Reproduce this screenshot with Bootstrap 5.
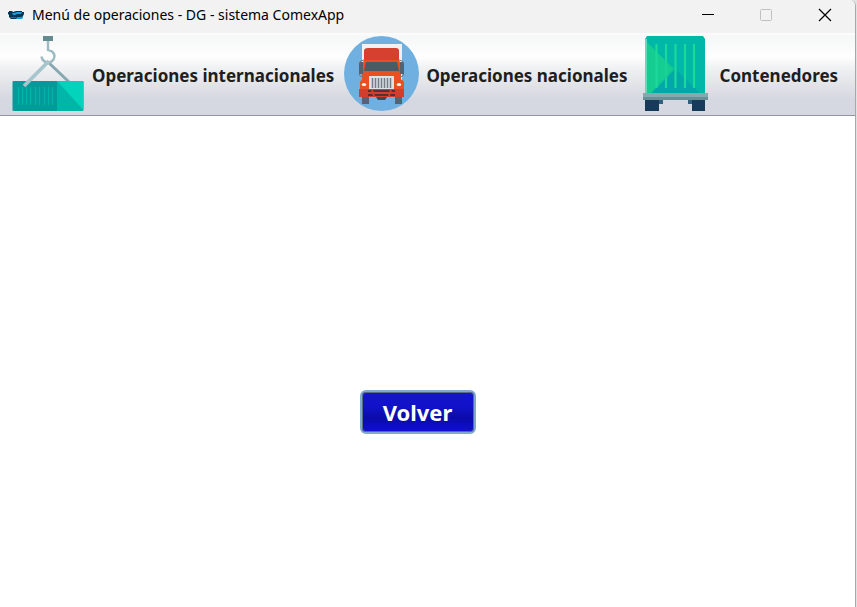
<!DOCTYPE html>
<html lang="es">
<head>
<meta charset="utf-8">
<meta name="viewport" content="width=device-width, initial-scale=1">
<title>Menú de operaciones - DG - sistema ComexApp</title>
<link href="https://cdn.jsdelivr.net/npm/bootstrap@5.3.0/dist/css/bootstrap.min.css" rel="stylesheet">
<style>
body { font-family: "Noto Sans", "Open Sans", sans-serif; background: #e2e2e2; }
.app-window { border-right: 1px solid #a8a8a8; border-top-right-radius: 6px; margin-right: 1px; overflow: hidden; }
.title-bar { height: 33px; background: #f2f2f2; padding: 0 23px 4px 8px; }
.title-text { font-size: 14px; line-height: 20px; color: #000; }
.window-controls { gap: 44px; }
.window-controls button { line-height: 0; }
.tool-bar { height: 83px; gap: 10px; padding: 0 10px 1px; border-bottom: 1px solid #9294a3;
  background: linear-gradient(#fdfdfd 0, #f6f7f7 4px, #fefefe 24px, #f0f1f2 35px, #d5d8e0 66px, #d5d8e0 100%); }
.tool-item { gap: 7px; color: #1e1e1e; font-size: 17px; line-height: 24px; }
.workspace { padding-bottom: 173px; padding-right: 20px; }
.back-btn { width: 116px; height: 44px; border: 2px solid #7fa9cf; border-radius: 6px; color: #fff; font-size: 22px; line-height: 30px;
  background: linear-gradient(#1414c8, #1212cb 35%, #0b0baa 65%, #1010d4); box-shadow: inset 0 0 0 1px #5c6c83; }
</style>
<script src="https://cdn.jsdelivr.net/npm/bootstrap@5.3.0/dist/js/bootstrap.bundle.min.js"></script>
</head>
<body>
<div class="app-window d-flex flex-column min-vh-100 bg-white">
  <header class="title-bar d-flex align-items-center justify-content-between">
    <div class="d-flex align-items-center gap-2">
      <svg width="16" height="16" viewBox="0 0 16 16" aria-hidden="true">
        <path d="M1 4h3l1 1 3-1h6v1h2v2l-1 2-1 3H3L1 10V8l-1-1V5h1z" fill="#083352"/>
        <path d="M4 6h2l3-1h5l-1 2H9L7 8H5zM9 10h4l2-1-1 3H8z" fill="#169ddb"/>
        <path d="M2 10h6v1H3z" fill="#0875a8"/>
      </svg>
      <span class="title-text text-nowrap">Menú de operaciones - DG - sistema ComexApp</span>
    </div>
    <div class="window-controls d-flex align-items-center">
      <button type="button" class="border-0 bg-transparent p-0" aria-label="Minimizar">
        <svg width="14" height="14" viewBox="0 0 14 14"><path d="M0 6.500h12" stroke="#000" fill="none"/></svg>
      </button>
      <button type="button" class="border-0 bg-transparent p-0" aria-label="Maximizar" disabled>
        <svg width="14" height="14" viewBox="0 0 14 14"><rect x="0.500" y="1.500" width="11" height="11" rx="1" stroke="#c0c0c0" fill="none"/></svg>
      </button>
      <button type="button" class="border-0 bg-transparent p-0" aria-label="Cerrar">
        <svg width="14" height="14" viewBox="0 0 14 14"><path d="M1 1l12 12M13 1L1 13" stroke="#000" stroke-width="1.200" fill="none"/></svg>
      </button>
    </div>
  </header>

  <nav class="tool-bar d-flex align-items-center" aria-label="Operaciones">
    <button type="button" class="tool-item d-flex align-items-center border-0 bg-transparent p-0 fw-bold text-nowrap">
      <svg width="75" height="75" viewBox="0 0 75 75" aria-hidden="true">
        <path d="M38 26l21 20" stroke="#87a8b0" stroke-width="3"/>
        <path d="M38 5v9l4 1.500Q46 19 43.500 23.500 41 27 37 26.500 32 25 31.500 20.500" fill="none" stroke="#9dbac2" stroke-width="2.400"/>
        <path d="M33 0h10v5H33z" fill="#648b8f"/>
        <rect x="2.500" y="45" width="45" height="30" rx="1" fill="#039a9a"/>
        <path d="M47 45h25.500q1 0 1 1v28q0 1-1 1H47z" fill="#01b6a9"/>
        <path d="M47 45h25.500q1 0 1 1v28z" fill="#02d3ba"/>
        <path d="M8.500 51v18M12.500 51v18M16.500 51v18M20.500 51v18M25.500 51v18M29.500 51v18M34.500 51v18M38.500 51v18M42.500 51v18" stroke="#01b3a7" stroke-width="1.300"/>
        <path d="M39 25L14 50" stroke="#a7c5cd" stroke-width="3.800"/>
      </svg>
      <span class="pt-1">Operaciones internacionales</span>
    </button>
    <button type="button" class="tool-item d-flex align-items-center border-0 bg-transparent p-0 fw-bold text-nowrap">
      <svg width="75" height="75" viewBox="0 0 75 75" aria-hidden="true">
        <circle cx="37.500" cy="37.500" r="37.500" fill="#6fb0e0"/>
        <path d="M18 8h40v43H18z" fill="#f0f1f5"/>
        <path d="M18 61h7v7h-7zM51 61h7v7h-7z" fill="#5a6270"/>
        <path d="M24 12h28q3 0 3 3v14H20V15q0-3 4-3z" fill="#d6402e"/>
        <path d="M20 24h35l2 5v15H18V29z" fill="#e8501f"/>
        <path d="M22 26h31l2 9H20z" fill="#4e5967"/>
        <path d="M15 26h4v12h-4zM56 26h4v12h-4z" fill="#556270"/>
        <path d="M20 24q-4 0-5 4M55 24q4 0 5 4M15 38q1 3 4 3M60 38q-1 3-4 3" stroke="#6e7883" fill="none"/>
        <path d="M16 46q1-3 7-3l3-3h24l3 3q6 0 7 3v9H16z" fill="#e8501f"/>
        <path d="M15 53h45v8H15z" fill="#d33d2e"/>
        <path d="M25 40h25v13H25z" fill="#dde0e4"/>
        <path d="M28.500 42v10M31.500 42v10M34.500 42v10M37.500 42v10M40.500 42v10M43.500 42v10M46.500 42v10" stroke="#737b86" stroke-width="1.500"/>
        <ellipse cx="20" cy="48.500" rx="2.200" ry="1.600" fill="#fff4ed"/><ellipse cx="55" cy="48.500" rx="2.200" ry="1.600" fill="#fff4ed"/>
        <path d="M24 54h27v2H24zM24 58h27v2H24z" fill="#5b2d35"/>
        <path d="M28 54l2 6M47 54l-2 6" stroke="#d33d2e" stroke-width="2"/>
        <path d="M32 61h11l-2 3h-7z" fill="#3f4854"/>
      </svg>
      <span class="pt-1">Operaciones nacionales</span>
    </button>
    <button type="button" class="tool-item d-flex align-items-center border-0 bg-transparent p-0 fw-bold text-nowrap">
      <svg width="75" height="75" viewBox="0 0 75 75" aria-hidden="true">
        <path d="M9 0h56l2 3v55H7V3z" fill="#01b7a7"/>
        <path d="M7 4l28 29L12 58H7z" fill="#16cd91"/>
        <path d="M7 3h2v55H7z" fill="#65d9b9"/>
        <path d="M37 33l26 25H13z" fill="#02a7aa"/>
        <path d="M18.500 8v44M28 8v44M37.500 8v44M47 8v44M56 8v44" stroke="#1cd99a" stroke-width="2.200"/>
        <path d="M20 17l17 16-17 18z" fill="#16cd91" opacity=".5"/>
        <path d="M5 57h65v4H5z" fill="#82abb0"/><path d="M5 61h65v3H5z" fill="#688f96"/>
        <path d="M18 64h7v4h-7zM50 64h8v4h-8z" fill="#315f80"/>
        <path d="M7 64h14v11H7zM54 64h13v11H54z" fill="#183a5a"/>
      </svg>
      <span class="pt-1">Contenedores</span>
    </button>
  </nav>

  <main class="workspace flex-grow-1 d-flex align-items-end justify-content-center">
    <button type="button" class="back-btn d-flex align-items-center justify-content-center p-0 fw-bold">Volver</button>
  </main>
</div>
</body>
</html>
